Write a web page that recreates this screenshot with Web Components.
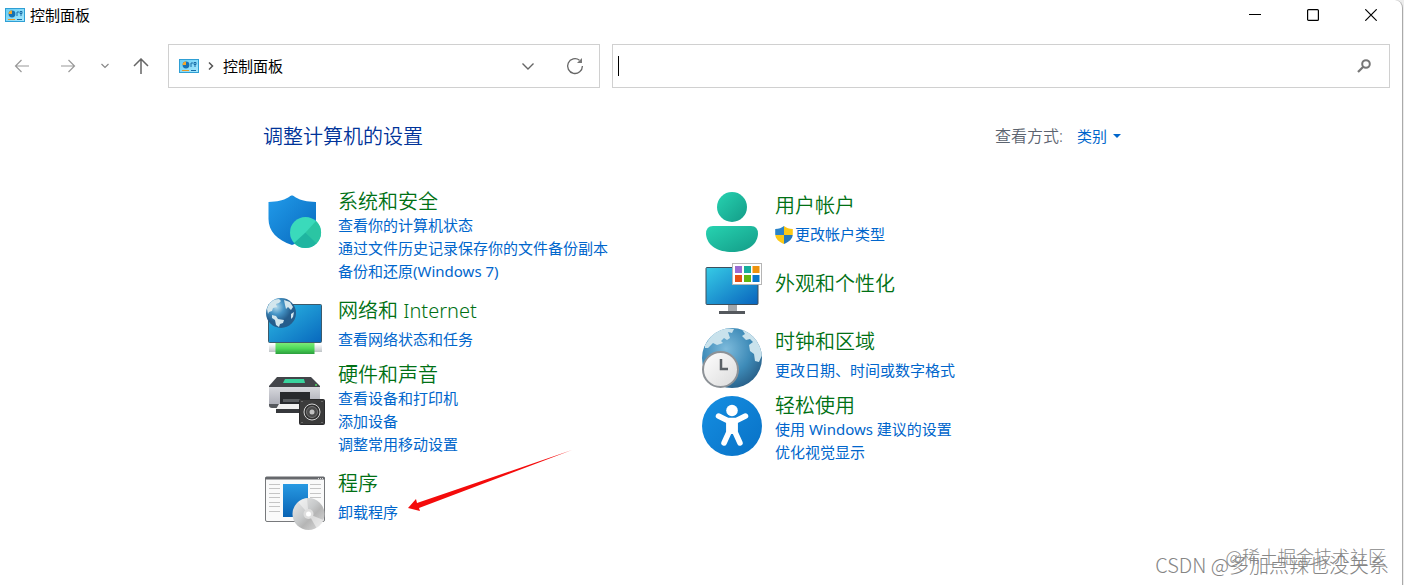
<!DOCTYPE html>
<html lang="zh-CN">
<head>
<meta charset="utf-8">
<title>控制面板</title>
<style>
  :root {
    --c-link: #0066cc;
    --c-heading: #007014;
    --c-title: #003399;
    --c-line: #d0d0d0;
    --c-muted: #5c6470;
  }
  body {
    margin: 0;
    background: #ececec;
    color: #111;
    font: 15px/23px "Noto Sans", "Noto Sans CJK SC", sans-serif;
    overflow: hidden;
  }
</style>
</head>
<body>

<cp-window>
  <cp-title-bar slot="title">控制面板</cp-title-bar>
  <cp-nav-bar slot="nav">控制面板</cp-nav-bar>

  <cp-page-header slot="header">调整计算机的设置</cp-page-header>

  <cp-column slot="left">
    <cp-category icon="security" heading="系统和安全">
      <a href="#status">查看你的计算机状态</a>
      <a href="#history">通过文件历史记录保存你的文件备份副本</a>
      <a href="#backup">备份和还原(Windows 7)</a>
    </cp-category>
    <cp-category icon="network" heading="网络和 Internet">
      <a href="#network">查看网络状态和任务</a>
    </cp-category>
    <cp-category icon="printer" heading="硬件和声音">
      <a href="#devices">查看设备和打印机</a>
      <a href="#add-device">添加设备</a>
      <a href="#mobility">调整常用移动设置</a>
    </cp-category>
    <cp-category icon="programs" heading="程序">
      <a href="#uninstall">卸载程序</a>
      <cp-pointer slot="overlay"></cp-pointer>
    </cp-category>
  </cp-column>

  <cp-column slot="right" inset>
    <cp-category icon="user" heading="用户帐户">
      <a href="#account-type"><cp-icon name="uac"></cp-icon>更改帐户类型</a>
    </cp-category>
    <cp-category icon="appearance" heading="外观和个性化"></cp-category>
    <cp-category icon="clock" heading="时钟和区域">
      <a href="#region">更改日期、时间或数字格式</a>
    </cp-category>
    <cp-category icon="access" heading="轻松使用">
      <a href="#suggest">使用 Windows 建议的设置</a>
      <a href="#visual">优化视觉显示</a>
    </cp-category>
  </cp-column>

  <cp-watermark slot="mark"></cp-watermark>
</cp-window>

<script>
/* Each icon: [width, height, svg body]. Gradient ids are scoped by the shadow root. */
const ICONS = {
  panel: [20, 14, `
    <defs><linearGradient id="g" x2="1" y2="1"><stop stop-color="#65cdf5"/><stop offset="1" stop-color="#a9e8fc"/></linearGradient></defs>
    <rect x=".5" y=".5" width="19" height="13" fill="url(#g)" stroke="#2f9fd4"/>
    <circle cx="7" cy="6" r="3.4" fill="#1672b4"/><path d="M7 6V2.500A3.400 3.400 0 0 0 3.600 6z" fill="#f4a62a"/>
    <path d="M12 8V4h2M15 3.500h2v2h-2zM15 7h2" fill="none" stroke="#196da7"/>
    <path d="M3 11.500h7" stroke="#e59928"/><path d="M12 11.500h5" stroke="#146ca7"/>`],
  back: [16, 16, `<path d="M15 8H1.500M7.500 2l-6 6 6 6" fill="none" stroke="#999" stroke-width="1.2"/>`],
  forward: [16, 16, `<path d="M1 8h13.500M8.500 2l6 6-6 6" fill="none" stroke="#999" stroke-width="1.2"/>`],
  recent: [8, 16, `<path d="M.5 6L4 9.500 7.500 6" fill="none" stroke="#888" stroke-width="1.2"/>`],
  up: [16, 16, `<path d="M8 16V1M1 8l7-7 7 7" fill="none" stroke="#666" stroke-width="1.5"/>`],
  crumb: [6, 10, `<path d="M1 1.500L4.500 5 1 8.500" fill="none" stroke="#555" stroke-width="1.5"/>`],
  drop: [14, 14, `<path d="M1.500 4.500L7 10l5.500-5.500" fill="none" stroke="#666" stroke-width="1.4"/>`],
  refresh: [18, 18, `<path d="M13.500 3.200A7.400 7.400 0 1 0 16.400 9" fill="none" stroke="#666" stroke-width="1.300"/><path d="M16 1v5h-5z" fill="#777"/>`],
  search: [14, 14, `<circle cx="9" cy="5" r="3.800" fill="none" stroke="#777" stroke-width="2"/><path d="M6.300 7.700L1 13" stroke="#777" stroke-width="2.200"/>`],
  min: [12, 12, `<path d="M0 5.500h12" stroke="#000"/>`],
  max: [12, 12, `<rect x=".6" y=".6" width="10.800" height="10.800" rx="1" fill="none" stroke="#000" stroke-width="1.200"/>`],
  close: [12, 12, `<path d="M.3.300l11.400 11.400M11.700.300L.300 11.700" stroke="#000" stroke-width="1.200"/>`],
  caret: [8, 4, `<path d="M0 0h8L4 4z" fill="#0066cc"/>`],

  uac: [18, 18, `
    <defs><clipPath id="c"><path d="M9 0c2.500 2 5 2.800 8.800 2.900V8c0 5-4 8-8.800 10C4.200 16 .2 13 .2 8V2.900C4 2.800 6.500 2 9 0z"/></clipPath></defs>
    <g clip-path="url(#c)"><path d="M0 0h9v9H0z" fill="#2b83c8"/><path d="M9 0h9v9H9zM0 9h9v9H0z" fill="#fbc817"/><path d="M9 9h9v9H9z" fill="#2678bb"/></g>`],

  security: [60, 60, `
    <defs><linearGradient id="a" x2="1" y2="1"><stop stop-color="#219bea"/><stop offset="1" stop-color="#0869bd"/></linearGradient></defs>
    <path d="M27 3.500c3 0 5 6 24 6.500v17c0 12-9 21-24 26C12 48 3.500 39 3.500 27V10C22 9.500 24 3.500 27 3.500z" fill="url(#a)"/>
    <circle cx="40.500" cy="40.500" r="15.500" fill="#3adabb"/>
    <path d="M40.500 40.500L51 29A15.500 15.500 0 0 1 51 52z" fill="#2bc5a3"/>
    <path d="M40.500 40.500L29 51A15.500 15.500 0 0 0 51.500 51.500z" fill="#1fb5a0"/>`],

  network: [60, 60, `
    <defs>
      <linearGradient id="a" x2="1" y2="1"><stop stop-color="#2ebbe5"/><stop offset="1" stop-color="#0868bd"/></linearGradient>
      <radialGradient id="b" cx=".35" cy=".3"><stop stop-color="#b2d9eb"/><stop offset=".5" stop-color="#4594c6"/><stop offset="1" stop-color="#255d8c"/></radialGradient>
      <linearGradient id="p" x2="0" y2="1"><stop stop-color="#7ceb78"/><stop offset=".5" stop-color="#4dd958"/><stop offset="1" stop-color="#2b9e3d"/></linearGradient>
      <linearGradient id="e" x2="0" y2="1"><stop stop-color="#fff"/><stop offset="1" stop-color="#bfc4c7"/></linearGradient>
    </defs>
    <rect x="3.500" y="7.500" width="53" height="38" rx="1" fill="url(#a)" stroke="#3c5a6b"/>
    <rect x="4" y="47" width="53" height="8" fill="url(#e)"/>
    <rect x="10.500" y="46" width="39" height="11" fill="url(#p)"/>
    <circle cx="16" cy="16" r="15" fill="url(#b)"/>
    <path d="M2 12C4 5 9 2 14 2l2 2-2 2-3 1 1 3-4 1-1 3-3 1-1 2zM19 3l6 2 3 5-2 3-3-3-2 2-1-4zM7 18l4 1 2 3 6 1-1 3-3 1-1 3-3-2-1-5-3-2zM26 17l3-2-1 5-2 2z" fill="#d3e6ed"/>`],

  printer: [60, 60, `
    <defs><linearGradient id="a" x2="0" y2="1"><stop stop-color="#d7d8dd"/><stop offset="1" stop-color="#a5a7b1"/></linearGradient></defs>
    <path d="M12 12h34l9 9v2H4v-2z" fill="#43454a"/>
    <path d="M20 14h19l1 4H18z" fill="#39d39d"/>
    <path d="M4 22h51v18q0 2-2 2H6q-2 0-2-2z" fill="url(#a)"/>
    <path d="M4 39h51v1q0 3-3 3H7q-3 0-3-3z" fill="#55585d"/>
    <circle cx="51" cy="20" r="1" fill="#50da62"/>
    <path d="M15 27h30v13H15z" fill="#27292d"/><path d="M18 34h24v3H18z" fill="#595c60"/>
    <path d="M11 44h26v4H11z" fill="#36383c"/><path d="M14 39h30v5H11z" fill="#f0f0f0"/>
    <rect x="34.500" y="34.500" width="25" height="25" rx="1" fill="#3b3b3b" stroke="#29292b"/>
    <circle cx="47" cy="47" r="8" fill="#303030" stroke="#d3d3d3"/><circle cx="47" cy="47" r="5.500" fill="#4b4b4b" stroke="#777"/>
    <circle cx="47" cy="47" r="2.500" fill="#c2c2c2"/>
    <path d="M36.500 36.500h1M56.500 36.500h1M36.500 57.500h1M56.500 57.500h1" stroke="#999"/>`],

  programs: [60, 60, `
    <defs>
      <linearGradient id="a" x2="0" y2="1"><stop stop-color="#2799e2"/><stop offset="1" stop-color="#0862b3"/></linearGradient>
      <linearGradient id="d" x2="1" y2="1"><stop stop-color="#ececec"/><stop offset=".45" stop-color="#c7c9ca"/><stop offset=".6" stop-color="#b5b5b5"/><stop offset="1" stop-color="#dedede"/></linearGradient>
    </defs>
    <rect x=".5" y="7.500" width="59" height="44" rx="1.500" fill="#fafafa" stroke="#77797c"/>
    <path d="M.5 9V8q0-1 1-1h57q1 0 1 1v1z" fill="#66696d" stroke="#66696d"/>
    <path d="M53 8.500h5" stroke="#ddd" stroke-dasharray="1 1"/>
    <path d="M4 14.500h11M4 18.500h11M4 23.500h11M4 27.500h11M4 32.500h11M4 36.500h11M4 41.500h11M45 14.500h11M45 18.500h11M45 23.500h11M45 27.500h11" stroke="#c5c5c5"/>
    <rect x="18" y="14" width="25" height="33" fill="url(#a)"/>
    <circle cx="43.500" cy="44" r="16" fill="url(#d)"/>
    <path d="M43.500 44L33 32a16 16 0 0 1 9-4z" fill="#fff" opacity=".45"/>
    <path d="M43.500 44l15 6a16 16 0 0 1-7 8z" fill="#fff" opacity=".5"/>
    <circle cx="43.500" cy="44" r="5" fill="#dedede"/><circle cx="43.500" cy="44" r="2.500" fill="#fff"/>`],

  user: [60, 60, `
    <defs><linearGradient id="a" x2="1" y2="1"><stop stop-color="#27d3b1"/><stop offset="1" stop-color="#139b87"/></linearGradient></defs>
    <circle cx="30" cy="15" r="15" fill="url(#a)"/>
    <path d="M11 34h38q7 0 7 8C55 54 44 60 30 60S5 54 4 42q0-8 7-8z" fill="url(#a)"/>`],

  appearance: [60, 60, `
    <defs><linearGradient id="a" x2="1" y2="1"><stop stop-color="#36cbe6"/><stop offset="1" stop-color="#0863bd"/></linearGradient></defs>
    <path d="M26 49h9v6h-9z" fill="#a3a7ab"/><path d="M17 55h26v3H17z" fill="#54585d"/>
    <rect x="4" y="11.500" width="52" height="37" rx="1" fill="url(#a)" stroke="#3c4f5d"/>
    <rect x="30.500" y="7.500" width="29" height="21" fill="#fff" stroke="#b5b5b5"/>
    <path d="M33 10h7v7h-7z" fill="#9b6bd3"/><path d="M42 10h7v7h-7z" fill="#17ae9b"/><path d="M50.500 10h7v7h-7z" fill="#ee930d"/>
    <path d="M33 19h7v7h-7z" fill="#e55015"/><path d="M42 19h7v7h-7z" fill="#62b511"/><path d="M50.500 19h7v7h-7z" fill="#0877cb"/>`],

  clock: [60, 60, `
    <defs>
      <radialGradient id="a" cx=".4" cy=".35" r=".75"><stop stop-color="#7ebbdc"/><stop offset=".55" stop-color="#3e8bb8"/><stop offset="1" stop-color="#24577f"/></radialGradient>
      <clipPath id="c"><circle cx="30" cy="30" r="30"/></clipPath>
      <linearGradient id="f" x2="1" y2="1"><stop stop-color="#fff"/><stop offset="1" stop-color="#dadada"/></linearGradient>
    </defs>
    <circle cx="30" cy="30" r="30" fill="url(#a)"/>
    <path clip-path="url(#c)" d="M3 17L12 4l9-4 11 1-2 4-4-1 2 6-3 2-3-2-3 3 2 2-6 2-4-2-5 5H3zM39 0l8 1 10 10 4 14-4 9-4-1-1-7-4-3-1-6 4-3-3-3-4 1-4-4 3-2z" fill="#c9e2ec"/>
    <circle cx="18.500" cy="41.500" r="17.500" fill="url(#f)" stroke="#8d9297" stroke-width="2"/>
    <path d="M19 31v10h7" fill="none" stroke="#5b6166" stroke-width="2.500"/>`],

  access: [60, 60, `
    <defs><linearGradient id="a" x2="1" y2="1"><stop stop-color="#158fe2"/><stop offset="1" stop-color="#0871c6"/></linearGradient></defs>
    <circle cx="30" cy="30" r="30" fill="url(#a)"/>
    <circle cx="30" cy="14.500" r="5.800" fill="#fff"/>
    <path d="M16.500 20l9 4.500h9l9-4.500M27 26v10l-5 11M33 26v10l5 11" fill="none" stroke="#fff" stroke-width="5.500" stroke-linecap="round" stroke-linejoin="round"/>
    <path d="M24.300 23h11.400v15H24.300z" fill="#fff"/>`],
};

class CpElement extends HTMLElement {
  constructor() {
    super();
    this.attachShadow({ mode: 'open' });
  }
  connectedCallback() { this.shadowRoot.innerHTML = this.render(); }
}

/* <cp-icon name="..."> */
class CpIcon extends CpElement {
  render() {
    const [w, h, body] = ICONS[this.getAttribute('name')];
    return `
      <style>
        :host { display: inline-block; flex: none; line-height: 0; }
        svg { display: block; }
      </style>
      <svg width="${w}" height="${h}" viewBox="0 0 ${w} ${h}" aria-hidden="true">${body}</svg>`;
  }
}

/* Window frame, with the edge of whatever sits behind it on the right. */
class CpWindow extends CpElement {
  render() {
    return `
      <style>
        :host { display: block; padding-right: 1px; }
        .frame {
          position: relative;
          box-sizing: border-box;
          min-height: 100vh;
          background: #fff;
          border-right: 1px solid #aaa;
          border-top-right-radius: 8px;
        }
        main { padding: 32px 281px 32px 263px; }
        .columns {
          display: grid;
          grid-template-columns: 437fr 419fr;
          align-items: start;
          padding: 36px 0 0 2px;
        }
      </style>
      <div class="frame">
        <slot name="title"></slot>
        <slot name="nav"></slot>
        <main>
          <slot name="header"></slot>
          <div class="columns">
            <slot name="left"></slot>
            <slot name="right"></slot>
          </div>
        </main>
        <slot name="mark"></slot>
      </div>`;
  }
}

class CpTitleBar extends CpElement {
  render() {
    return `
      <style>
        :host { display: flex; align-items: center; height: 30px; padding: 0 2px 1px 5px; }
        .name { flex: 1; margin-left: 5px; color: #000; }
        button {
          display: flex; align-items: center; justify-content: center;
          width: 58px; height: 30px; padding: 0; border: 0; background: none;
        }
      </style>
      <cp-icon name="panel"></cp-icon>
      <span class="name"><slot></slot></span>
      <button type="button" aria-label="最小化"><cp-icon name="min"></cp-icon></button>
      <button type="button" aria-label="最大化"><cp-icon name="max"></cp-icon></button>
      <button type="button" aria-label="关闭"><cp-icon name="close"></cp-icon></button>`;
  }
}

class CpNavBar extends CpElement {
  render() {
    return `
      <style>
        :host {
          display: grid; grid-template-columns: 142px 432fr 778fr; gap: 12px;
          padding: 13px 12px 0 14px;
        }
        button {
          display: flex; align-items: center; justify-content: center;
          padding: 0; border: 0; background: none;
        }
        .history { display: flex; align-items: center; }
        .history button { height: 44px; }
        .history button + button { margin-left: 30px; }
        .history .recent { margin-left: 25px; }
        .history .recent + button { margin-left: 24px; }
        .box {
          display: flex; align-items: center;
          box-sizing: border-box; height: 44px; min-width: 0;
          border: 1px solid var(--c-line); background: #fff;
        }
        .address { gap: 9px; padding: 0 15px 0 10px; }
        .address a { flex: 1; color: #000; text-decoration: none; }
        .address .refresh { margin-left: 22px; }
        .search { padding: 0 18px 0 5px; }
        .cursor { width: 1px; height: 20px; background: #000; }
        input {
          flex: 1; min-width: 0; height: 40px; padding: 0 4px;
          border: 0; outline: 0; background: none; font: inherit;
        }
      </style>
      <div class="history">
        <button type="button" aria-label="后退"><cp-icon name="back"></cp-icon></button>
        <button type="button" aria-label="前进"><cp-icon name="forward"></cp-icon></button>
        <button type="button" class="recent" aria-label="最近浏览的位置"><cp-icon name="recent"></cp-icon></button>
        <button type="button" aria-label="上移"><cp-icon name="up"></cp-icon></button>
      </div>
      <div class="box address">
        <cp-icon name="panel"></cp-icon>
        <cp-icon name="crumb"></cp-icon>
        <a href="#root"><slot></slot></a>
        <button type="button" aria-label="以前的位置"><cp-icon name="drop"></cp-icon></button>
        <button type="button" class="refresh" aria-label="刷新"><cp-icon name="refresh"></cp-icon></button>
      </div>
      <div class="box search">
        <span class="cursor"></span>
        <input type="text" aria-label="搜索控制面板">
        <button type="button" aria-label="搜索"><cp-icon name="search"></cp-icon></button>
      </div>`;
  }
}

class CpPageHeader extends CpElement {
  render() {
    return `
      <style>
        :host { display: flex; align-items: center; justify-content: space-between; height: 32px; }
        h1 { margin: 0; padding-top: 2px; font-size: 20px; line-height: 24px; font-weight: 350; color: var(--c-title); }
        .view { display: flex; align-items: center; }
        label { margin-right: 14px; font-size: 16px; font-weight: 350; color: var(--c-muted); }
        select {
          appearance: none; margin: 0 5px 0 0; padding: 0; border: 0;
          background: none; font: inherit; color: var(--c-link);
        }
      </style>
      <h1><slot></slot></h1>
      <div class="view">
        <label for="view">查看方式:</label>
        <select id="view"><option>类别</option></select>
        <cp-icon name="caret"></cp-icon>
      </div>`;
  }
}

class CpColumn extends CpElement {
  render() {
    return `
      <style>
        :host { display: flex; flex-direction: column; gap: 4px; }
        :host([inset]) { padding-top: 4px; }
      </style>
      <slot></slot>`;
  }
}

/*
 * <cp-category icon heading> with its task links as children.
 * The spacing depends on the number of links: none, one or a list.
 */
class CpCategory extends CpElement {
  render() {
    const count = this.querySelectorAll('a').length;
    const kind = count === 0 ? 'bare' : count === 1 ? 'single' : 'list';
    return `
      <style>
        :host { display: block; position: relative; }
        section { display: flex; gap: 13px; }
        h2 { margin: 0; padding-top: 2px; font-size: 20px; line-height: 24px; font-weight: 350; color: var(--c-heading); }
        .single h2 { margin-bottom: 5px; }
        .list { padding-bottom: 10px; }
        .list cp-icon { margin-top: 4px; }
        .bare { align-items: center; padding-bottom: 8px; }
        .bare .text { padding-bottom: 6px; }
        ::slotted(a) {
          display: flex; align-items: center; gap: 2px; width: fit-content;
          color: var(--c-link); text-decoration: none; white-space: nowrap;
        }
      </style>
      <section class="${kind}">
        <cp-icon name="${this.getAttribute('icon')}"></cp-icon>
        <div class="text">
          <h2>${this.getAttribute('heading')}</h2>
          <slot></slot>
        </div>
      </section>
      <slot name="overlay"></slot>`;
  }
}

/* Red arrow laid over the page, pointing at the link on its left. */
class CpPointer extends CpElement {
  render() {
    return `
      <style>
        :host { position: absolute; left: 143px; top: -21px; pointer-events: none; line-height: 0; }
      </style>
      <svg width="166" height="64" viewBox="0 0 166 64" aria-hidden="true">
        <path d="M0 59L8 50l1 4L164 1 11 59l1 3z" fill="#f40b0b"/>
      </svg>`;
  }
}

class CpWatermark extends CpElement {
  render() {
    return `
      <style>
        :host { position: absolute; right: 13px; bottom: 7px; pointer-events: none; color: #858585; white-space: nowrap; text-align: right; font-family: "Noto Sans CJK SC", sans-serif; font-weight: 300; }
        span { display: block; }
        .site { margin: 0 3px -16px 0; font-size: 18px; line-height: 24px; color: #888; }
        .author { font-size: 20px; line-height: 26px; }
      </style>
      <span class="site">@稀土掘金技术社区</span>
      <span class="author">CSDN @多加点辣也没关系</span>`;
  }
}

customElements.define('cp-icon', CpIcon);
customElements.define('cp-window', CpWindow);
customElements.define('cp-title-bar', CpTitleBar);
customElements.define('cp-nav-bar', CpNavBar);
customElements.define('cp-page-header', CpPageHeader);
customElements.define('cp-column', CpColumn);
customElements.define('cp-category', CpCategory);
customElements.define('cp-pointer', CpPointer);
customElements.define('cp-watermark', CpWatermark);
</script>
</body>
</html>
